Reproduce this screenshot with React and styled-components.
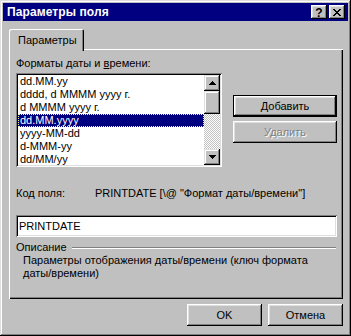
import React from "react";
import styled, { createGlobalStyle } from "styled-components";

const GlobalStyle = createGlobalStyle`
  html, body {
    margin: 0;
    padding: 0;
    background: #c0c0c0;
  }
  body {
    font-family: "Liberation Sans", Arial, sans-serif;
    font-size: 11px;
    color: #000;
  }
`;

const raisedEdge = `
  box-shadow: inset -1px -1px #000, inset 1px 1px #fff,
    inset -2px -2px #808080, inset 2px 2px #dfdfdf;
`;

const sunkenEdge = `
  box-shadow: inset 1px 1px #808080, inset -1px -1px #fff,
    inset 2px 2px #000, inset -2px -2px #dfdfdf;
`;

const Window = styled.div`
  width: 351px;
  height: 336px;
  box-sizing: border-box;
  padding: 3px;
  background: #c0c0c0;
  box-shadow: inset -1px -1px #000, inset 1px 1px #dfdfdf,
    inset -2px -2px #808080, inset 2px 2px #fff;
  display: flex;
  flex-direction: column;
`;

const TitleBar = styled.div`
  height: 18px;
  background: #000080;
  display: flex;
  align-items: center;
  justify-content: space-between;
  padding: 0 3px 0 4px;
`;

const Title = styled.span`
  color: #fff;
  font-weight: bold;
  font-size: 12px;
  letter-spacing: 0.1px;
`;

const TitleButtons = styled.div`
  display: flex;
  gap: 2px;
`;

const TitleButton = styled.div`
  width: 16px;
  height: 14px;
  box-sizing: border-box;
  background: #c0c0c0;
  ${raisedEdge}
  display: flex;
  align-items: center;
  justify-content: center;
  font-weight: bold;
  font-size: 12px;
  line-height: 14px;
  padding-top: 1px;
`;

const Body = styled.div`
  flex: 1;
  display: flex;
  flex-direction: column;
  padding: 8px 5px 0 6px;
`;

const TabRow = styled.div`
  display: flex;
  height: 20px;
`;

const Tab = styled.div`
  width: 75px;
  height: 22px;
  box-sizing: border-box;
  padding: 5px 0 0 9px;
  background: #c0c0c0;
  border-radius: 2px 2px 0 0;
  box-shadow: inset 1px 1px #fff, inset -1px 0 #000, inset -2px 0 #808080;
  z-index: 1;
  line-height: 13px;
`;

const Panel = styled.div`
  height: 250px;
  box-sizing: border-box;
  padding: 8px 6px 0 7px;
  box-shadow: inset 1px 1px #fff, inset -1px -1px #000,
    inset -2px -2px #808080;
  display: flex;
  flex-direction: column;
`;

const Label = styled.div`
  line-height: 13px;
  height: 13px;
  white-space: nowrap;
  width: ${(p) => (p.$width ? `${p.$width}px` : "auto")};
  flex-shrink: 0;
`;

const FormatsRow = styled.div`
  display: flex;
  margin-top: 3px;
`;

const ListBox = styled.div`
  width: 206px;
  height: 94px;
  box-sizing: border-box;
  padding: 2px;
  background: #fff;
  ${sunkenEdge}
  display: flex;
`;

const Items = styled.div`
  flex: 1;
  overflow: hidden;
`;

const Item = styled.div`
  height: 13px;
  line-height: 13px;
  padding-left: 2px;
  white-space: nowrap;
  background: ${(p) => (p.$selected ? "#000080" : "transparent")};
  color: ${(p) => (p.$selected ? "#fff" : "#000")};
  outline: ${(p) => (p.$selected ? "1px dotted #ffff80" : "none")};
  outline-offset: -1px;
`;

const ScrollBar = styled.div`
  width: 16px;
  display: flex;
  flex-direction: column;
`;

const ScrollButton = styled.div`
  width: 16px;
  height: 16px;
  box-sizing: border-box;
  background: #c0c0c0;
  box-shadow: inset -1px -1px #000, inset 1px 1px #dfdfdf,
    inset -2px -2px #808080, inset 2px 2px #fff;
  display: flex;
  align-items: center;
  justify-content: center;
`;

const Track = styled.div`
  flex: 1;
  background: repeating-conic-gradient(#c0c0c0 0 25%, #fff 0 50%) 0 0 / 2px
    2px;
`;

const Thumb = styled.div`
  height: 23px;
  background: #c0c0c0;
  box-shadow: inset -1px -1px #000, inset 1px 1px #dfdfdf,
    inset -2px -2px #808080, inset 2px 2px #fff;
`;

const SideButtons = styled.div`
  margin-left: auto;
  padding-top: 22px;
  display: flex;
  flex-direction: column;
  gap: 4px;
`;

const Button = styled.div`
  width: ${(p) => p.$width}px;
  height: ${(p) => p.$height || 22}px;
  box-sizing: border-box;
  background: #c0c0c0;
  display: flex;
  align-items: center;
  justify-content: center;
  line-height: 13px;
  ${raisedEdge}
  ${(p) =>
    p.$default &&
    `box-shadow: inset 0 0 0 1px #000, inset -2px -2px #000, inset 2px 2px #fff,
      inset -3px -3px #808080, inset 3px 3px #dfdfdf;`}
  color: ${(p) => (p.$disabled ? "#808080" : "#000")};
  text-shadow: ${(p) => (p.$disabled ? "1px 1px 0 #fff" : "none")};
`;

const CodeRow = styled.div`
  display: flex;
  margin-top: 20px;
`;

const TextField = styled.div`
  margin-top: 15px;
  height: 22px;
  box-sizing: border-box;
  padding: 0 3px;
  background: #fff;
  ${sunkenEdge}
  display: flex;
  align-items: center;
  line-height: 13px;
`;

const GroupHeader = styled.div`
  display: flex;
  align-items: center;
  margin-top: 4px;
`;

const GroupLine = styled.div`
  flex: 1;
  height: 0;
  border-top: 1px solid #808080;
  border-bottom: 1px solid #fff;
  margin: 1px 1px 0 5px;
`;

const Description = styled.div`
  padding-left: 7px;
  line-height: 13px;
`;

const Footer = styled.div`
  display: flex;
  justify-content: flex-end;
  gap: 6px;
  margin-top: 5px;
`;

const ArrowUp = () => (
  <svg width="7" height="4" viewBox="0 0 7 4">
    <path d="M3 0h1v1h1v1h1v1h1v1H0V3h1V2h1V1h1z" fill="#000" />
  </svg>
);

const ArrowDown = () => (
  <svg width="7" height="4" viewBox="0 0 7 4">
    <path d="M0 0h7v1H6v1H5v1H4v1H3V3H2V2H1V1H0z" fill="#000" />
  </svg>
);

const CloseGlyph = () => (
  <svg width="8" height="7" viewBox="0 0 8 7">
    <path
      d="M0 0h2v1h1v1h2V1h1V0h2v1H7v1H6v1H5v1h1v1h1v1h1v1H6V6H5V5H3v1H2v1H0V6h1V5h1V4h1V3H2V2H1V1H0z"
      fill="#000"
    />
  </svg>
);

const formats = [
  "dd.MM.yy",
  "dddd, d MMMM yyyy г.",
  "d MMMM yyyy г.",
  "dd.MM.yyyy",
  "yyyy-MM-dd",
  "d-MMM-yy",
  "dd/MM/yy",
];

export default function App() {
  return (
    <>
      <GlobalStyle />
      <Window>
        <TitleBar>
          <Title>Параметры поля</Title>
          <TitleButtons>
            <TitleButton>?</TitleButton>
            <TitleButton>
              <CloseGlyph />
            </TitleButton>
          </TitleButtons>
        </TitleBar>
        <Body>
          <TabRow>
            <Tab>Параметры</Tab>
          </TabRow>
          <Panel>
            <Label>
              Форматы даты и <u>в</u>ремени:
            </Label>
            <FormatsRow>
              <ListBox>
                <Items>
                  {formats.map((f, i) => (
                    <Item key={f} $selected={i === 3}>
                      {f}
                    </Item>
                  ))}
                </Items>
                <ScrollBar>
                  <ScrollButton>
                    <ArrowUp />
                  </ScrollButton>
                  <Track>
                    <Thumb />
                  </Track>
                  <ScrollButton>
                    <ArrowDown />
                  </ScrollButton>
                </ScrollBar>
              </ListBox>
              <SideButtons>
                <Button $width={104} $default>
                  <span>
                    <u>Д</u>обавить
                  </span>
                </Button>
                <Button $width={104} $disabled>
                  Удалить
                </Button>
              </SideButtons>
            </FormatsRow>
            <CodeRow>
              <Label $width={79}>
                Ко<u>д</u> поля:
              </Label>
              <Label>PRINTDATE [\@ "Формат даты/времени"]</Label>
            </CodeRow>
            <TextField>PRINTDATE</TextField>
            <GroupHeader>
              <Label>Описание</Label>
              <GroupLine />
            </GroupHeader>
            <Description>
              Параметры отображения даты/времени (ключ формата
              <br />
              даты/времени)
            </Description>
          </Panel>
          <Footer>
            <Button $width={75}>OK</Button>
            <Button $width={75}>Отмена</Button>
          </Footer>
        </Body>
      </Window>
    </>
  );
}
